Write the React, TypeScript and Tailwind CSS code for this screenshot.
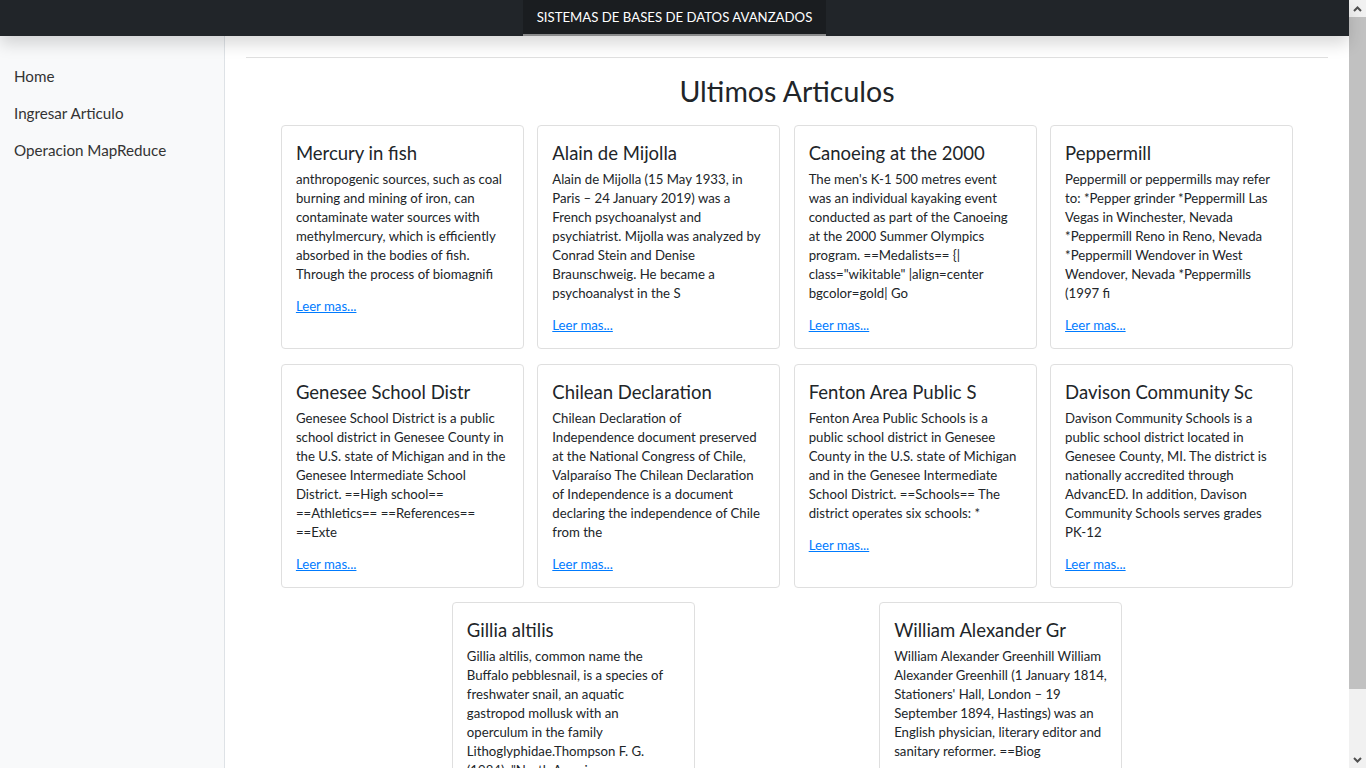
import React from "react";

type Card = { title: string; lines: string[] };

const cards: Card[] = [
  {
    title: "Mercury in fish",
    lines: [
      "anthropogenic sources, such as coal",
      "burning and mining of iron, can",
      "contaminate water sources with",
      "methylmercury, which is efficiently",
      "absorbed in the bodies of fish.",
      "Through the process of biomagnifi",
    ],
  },
  {
    title: "Alain de Mijolla",
    lines: [
      "Alain de Mijolla (15 May 1933, in",
      "Paris \u2013 24 January 2019) was a",
      "French psychoanalyst and",
      "psychiatrist. Mijolla was analyzed by",
      "Conrad Stein and Denise",
      "Braunschweig. He became a",
      "psychoanalyst in the S",
    ],
  },
  {
    title: "Canoeing at the 2000",
    lines: [
      "The men's K-1 500 metres event",
      "was an individual kayaking event",
      "conducted as part of the Canoeing",
      "at the 2000 Summer Olympics",
      "program. ==Medalists== {|",
      'class="wikitable" |align=center',
      "bgcolor=gold| Go",
    ],
  },
  {
    title: "Peppermill",
    lines: [
      "Peppermill or peppermills may refer",
      "to: *Pepper grinder *Peppermill Las",
      "Vegas in Winchester, Nevada",
      "*Peppermill Reno in Reno, Nevada",
      "*Peppermill Wendover in West",
      "Wendover, Nevada *Peppermills",
      "(1997 fi",
    ],
  },
  {
    title: "Genesee School Distr",
    lines: [
      "Genesee School District is a public",
      "school district in Genesee County in",
      "the U.S. state of Michigan and in the",
      "Genesee Intermediate School",
      "District. ==High school==",
      "==Athletics== ==References==",
      "==Exte",
    ],
  },
  {
    title: "Chilean Declaration",
    lines: [
      "Chilean Declaration of",
      "Independence document preserved",
      "at the National Congress of Chile,",
      "Valpara\u00edso The Chilean Declaration",
      "of Independence is a document",
      "declaring the independence of Chile",
      "from the",
    ],
  },
  {
    title: "Fenton Area Public S",
    lines: [
      "Fenton Area Public Schools is a",
      "public school district in Genesee",
      "County in the U.S. state of Michigan",
      "and in the Genesee Intermediate",
      "School District. ==Schools== The",
      "district operates six schools: *",
    ],
  },
  {
    title: "Davison Community Sc",
    lines: [
      "Davison Community Schools is a",
      "public school district located in",
      "Genesee County, MI. The district is",
      "nationally accredited through",
      "AdvancED. In addition, Davison",
      "Community Schools serves grades",
      "PK-12",
    ],
  },
  {
    title: "Gillia altilis",
    lines: [
      "Gillia altilis, common name the",
      "Buffalo pebblesnail, is a species of",
      "freshwater snail, an aquatic",
      "gastropod mollusk with an",
      "operculum in the family",
      "Lithoglyphidae.Thompson F. G.",
      '(1984). "North America',
    ],
  },
  {
    title: "William Alexander Gr",
    lines: [
      "William Alexander Greenhill William",
      "Alexander Greenhill (1 January 1814,",
      "Stationers' Hall, London \u2013 19",
      "September 1894, Hastings) was an",
      "English physician, literary editor and",
      "sanitary reformer. ==Biog",
    ],
  },
];

function ArticleCard({ card }: { card: Card }) {
  return (
    <div className="w-[243px] mx-[6.5px] mb-[14.5px] border border-[#dfdfdf] rounded-[4px] bg-white px-[14px] pt-[15px] pb-[13px] flex flex-col">
      <h5 className="text-[18.5px] leading-[24px] text-[#212529] whitespace-nowrap mb-[5px]">
        {card.title}
      </h5>
      <p className="text-[13.2px] leading-[19px] text-[#212529] whitespace-nowrap">
        {card.lines.map((l, i) => (
          <React.Fragment key={i}>
            {l}
            {i < card.lines.length - 1 && <br />}
          </React.Fragment>
        ))}
      </p>
      <a
        href="#"
        className="mt-[13px] text-[13.2px] leading-[19px] text-[#007bff] underline"
      >
        Leer mas...
      </a>
    </div>
  );
}

export default function App() {
  return (
    <div
      className="w-[1366px] h-[768px] overflow-hidden flex bg-white"
      style={{ fontFamily: '"Lato", "Liberation Sans", sans-serif' }}
    >
      <div className="flex-1 min-w-0 flex flex-col">
        <nav className="relative z-10 h-[36px] shrink-0 bg-[#212529] flex justify-center shadow-[0_8px_16px_rgba(0,0,0,0.15)]">
          <div className="w-[303px] h-[36px] bg-[#1a1d20] shadow-[inset_0_-2px_0_#8a8b8c] flex items-center justify-center text-white text-[13.2px]">
            SISTEMAS DE BASES DE DATOS AVANZADOS
          </div>
        </nav>
        <div className="flex flex-1 min-h-0">
          <aside className="w-[225px] shrink-0 bg-[#f8f9fa] border-r border-[#dee2e6] pt-[22px]">
            {["Home", "Ingresar Articulo", "Operacion MapReduce"].map((t) => (
              <a
                key={t}
                href="#"
                className="block px-[14px] py-[8px] text-[15.2px] leading-[21px] text-[#333]"
              >
                {t}
              </a>
            ))}
          </aside>
          <main className="flex-1 min-w-0 px-[21px] pt-[21px]">
            <hr className="border-0 border-t border-[#e0e0e0]" />
            <h2 className="text-center text-[28.5px] leading-[34px] text-[#212529] mt-[16px] mb-[17px]">
              Ultimos Articulos
            </h2>
            <div className="w-[1026px] mx-auto flex flex-wrap justify-evenly">
              {cards.map((c, i) => (
                <ArticleCard key={i} card={c} />
              ))}
            </div>
          </main>
        </div>
      </div>
      <div className="w-[17px] shrink-0 bg-[#f1f1f1] flex flex-col">
        <div className="h-[17px] flex items-center justify-center">
          <svg width="9" height="6" viewBox="0 0 9 6">
            <path d="M1 5 L4.5 1.5 L8 5" stroke="#505050" strokeWidth="2" fill="none" />
          </svg>
        </div>
        <div className="h-[672px] bg-[#c1c1c1]" />
        <div className="flex-1" />
        <div className="h-[17px] flex items-center justify-center">
          <svg width="9" height="6" viewBox="0 0 9 6">
            <path d="M1 1 L4.5 4.5 L8 1" stroke="#505050" strokeWidth="2" fill="none" />
          </svg>
        </div>
      </div>
    </div>
  );
}
